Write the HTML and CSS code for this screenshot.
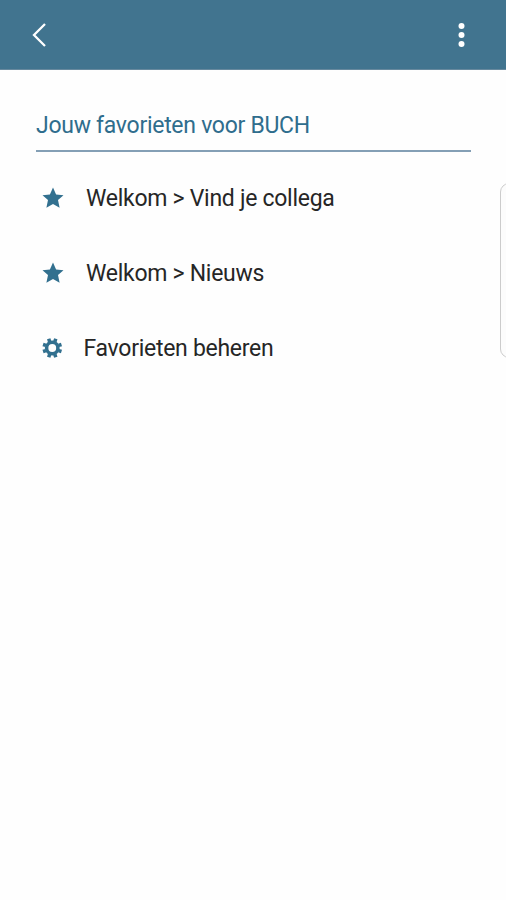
FILE: index.html
```html
<!DOCTYPE html>
<html lang="nl">
<head>
<meta charset="utf-8">
<title>Favorieten</title>
<link rel="stylesheet" href="styles.css">
</head>
<body>
<header class="bar">
  <svg class="back" viewBox="0 0 18 26"><path d="M15 2 4 13l11 11"/></svg>
  <svg class="more" viewBox="0 0 8 26"><circle cx="4" cy="4" r="3"/><circle cx="4" cy="13" r="3"/><circle cx="4" cy="22" r="3"/></svg>
</header>
<main class="content">
  <h1 class="title">Jouw favorieten voor BUCH</h1>
  <ul class="list">
    <li class="item"><svg class="icon star" viewBox="0 0 22 22"><path d="M11 .5 14.1 7.4l7.4.8-5.5 4.9 1.6 7.6L11 16.9l-6.6 3.8L6 13.1.5 8.2l7.4-.8z"/></svg><span class="label">Welkom &gt; Vind je collega</span></li>
    <li class="item"><svg class="icon star" viewBox="0 0 22 22"><path d="M11 .5 14.1 7.4l7.4.8-5.5 4.9 1.6 7.6L11 16.9l-6.6 3.8L6 13.1.5 8.2l7.4-.8z"/></svg><span class="label">Welkom &gt; Nieuws</span></li>
    <li class="item manage"><svg class="icon gear" viewBox="-11 -11 22 22"><circle r="6.1"/><path d="M-2.8-6.8-3.8-9.9M2.8-6.8 3.8-9.9M-2.8 6.8-3.8 9.9M2.8 6.8 3.8 9.9M-6.8-2.8-9.9-3.8M-6.8 2.8-9.9 3.8M6.8-2.8 9.9-3.8M6.8 2.8 9.9 3.8"/></svg><span class="label">Favorieten beheren</span></li>
  </ul>
</main>
<div class="edge-handle"></div>
</body>
</html>
```

FILE: styles.css
```css
* { box-sizing: border-box; }
body {
  margin: 0;
  height: 900px;
  position: relative;
  overflow: hidden;
  background: #fefefe;
  color: #262626;
  font-family: Roboto, "Liberation Sans", sans-serif;
  font-size: 23px;
  letter-spacing: -0.28px;
}
.bar {
  height: 70px;
  padding: 0 40px 0 30px;
  display: flex;
  align-items: center;
  justify-content: space-between;
  background: #41748f;
  border-bottom: 1px solid #67899e;
}
.back { width: 18px; height: 26px; fill: none; stroke: #fff; stroke-width: 2.3; }
.more { width: 9px; height: 26px; fill: #fff; }
.content { padding: 36px 35px 0 36px; }
.title {
  height: 46px;
  margin: 0;
  padding-top: 6px;
  border-bottom: 2px solid #849fb5;
  color: #2f6d8d;
  font-size: 23px;
  font-weight: 400;
  line-height: 28px;
}
.list { margin: 8px 0 0; padding: 0 0 0 6px; list-style: none; }
.item { height: 75px; display: flex; align-items: center; gap: 22px; }
.manage { gap: 21px; }
.icon { width: 22px; height: 22px; flex: none; }
.star { fill: #32708f; }
.gear { width: 20.5px; fill: none; stroke: #32708f; stroke-width: 3.8; }
.label { white-space: nowrap; line-height: 28px; padding-top: 2px; }
.edge-handle {
  position: absolute;
  top: 183px;
  left: 500px;
  width: 20px;
  height: 175px;
  background: #fcfcfc;
  border: 1px solid #ccc;
  border-radius: 9px;
}
```
